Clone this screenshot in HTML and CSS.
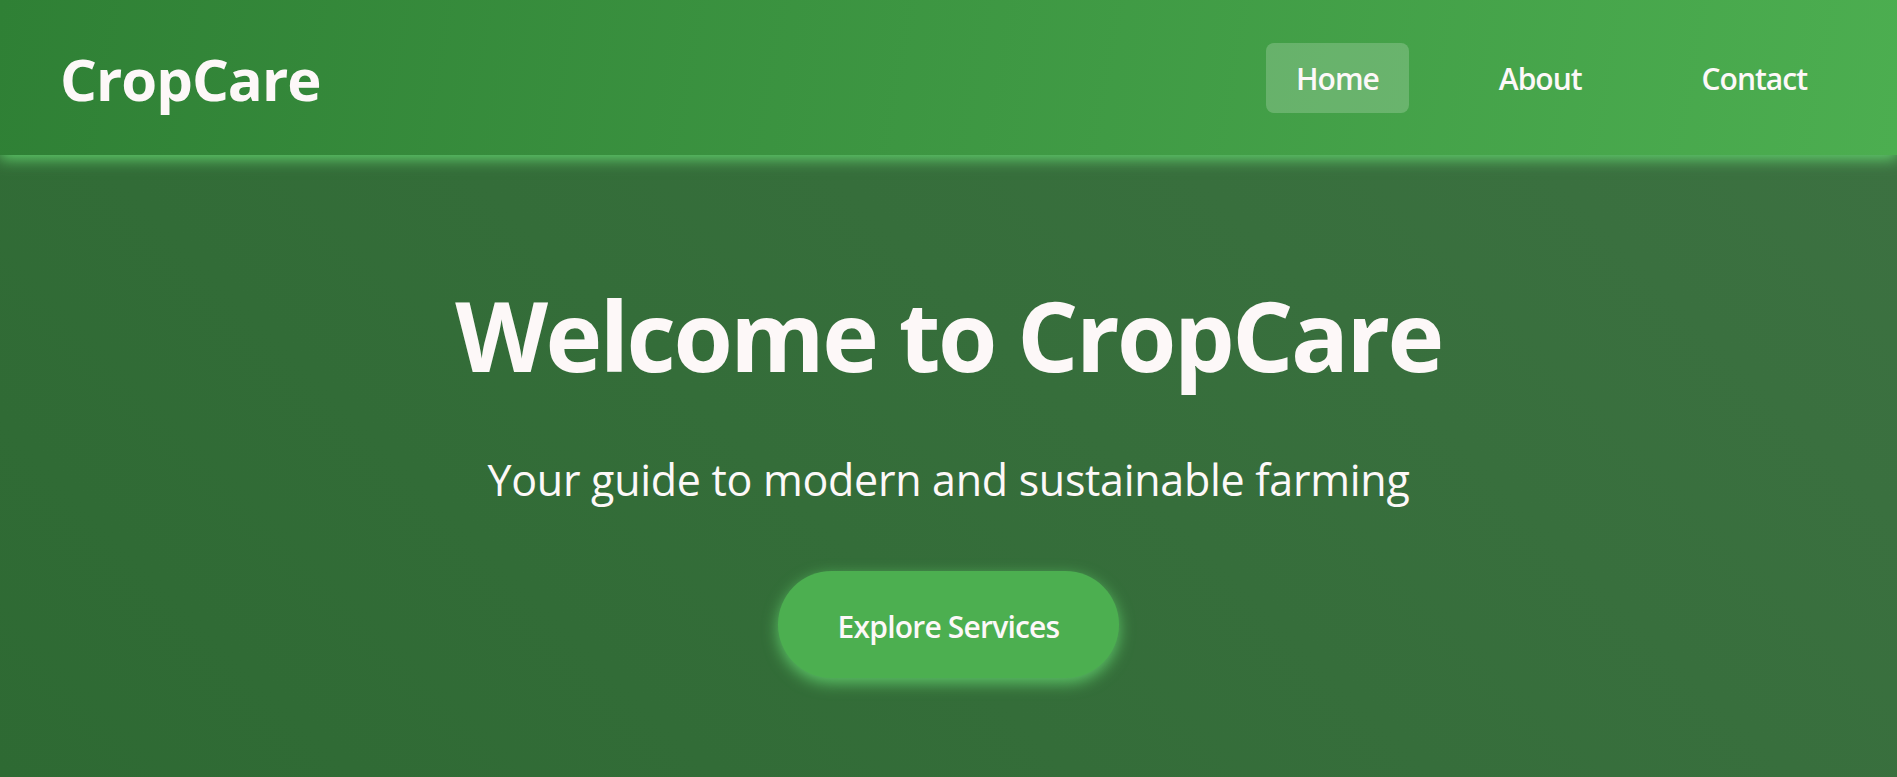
FILE: index.html
```html
<!DOCTYPE html>
<html lang="en">
<head>
<meta charset="utf-8">
<title>CropCare</title>
<link rel="stylesheet" href="styles.css">
</head>
<body>
<header class="site-header">
  <div class="logo">CropCare</div>
  <nav class="nav">
    <a class="nav-link active" href="#">Home</a>
    <a class="nav-link" href="#">About</a>
    <a class="nav-link" href="#">Contact</a>
  </nav>
</header>
<main class="hero">
  <h1 class="hero-title">Welcome to CropCare</h1>
  <p class="hero-sub">Your guide to modern and sustainable farming</p>
  <a class="btn" href="#">Explore Services</a>
</main>
</body>
</html>
```
FILE: styles.css
```css
* { box-sizing: border-box; }
html, body { margin: 0; padding: 0; }
body {
  font-family: "Open Sans", "Noto Sans", sans-serif;
  color: #fdf8f8;
  background: #316b36;
  overflow: hidden;
}
.site-header {
  position: relative;
  z-index: 2;
  height: 155px;
  padding: 0 60px;
  display: flex;
  align-items: center;
  justify-content: space-between;
  background: linear-gradient(100deg, #2f8035 0%, #4cae50 100%);
  box-shadow: 0 4px 14px rgba(104, 222, 116, 0.85);
}
.logo {
  font-size: 58px;
  font-weight: 700;
  line-height: 1.2;
  letter-spacing: -1px;
  margin-top: 3px;
}
.nav { display: flex; gap: 60px; }
.nav-link {
  color: #fdf8f8;
  text-decoration: none;
  font-size: 30px;
  font-weight: 600;
  line-height: 36px;
  letter-spacing: -1px;
  padding: 18px 30px 16px;
  border-radius: 8px;
}
.nav-link.active { background: rgba(255, 255, 255, 0.2); }
.hero {
  min-height: calc(100vh - 155px);
  padding-top: 122px;
  display: flex;
  flex-direction: column;
  align-items: center;
  text-align: center;
  background: linear-gradient(45deg, #2e6a33 0%, #3c7141 100%);
}
.hero-title {
  margin: 0;
  font-size: 96px;
  font-weight: 700;
  line-height: 1.2;
  letter-spacing: -2.5px;
}
.hero-sub {
  margin: 62px 0 0;
  font-size: 43px;
  font-weight: 400;
  line-height: 1.2;
  letter-spacing: -0.3px;
}
.btn {
  margin-top: 65px;
  display: inline-block;
  color: #fdf8f8;
  text-decoration: none;
  background: #4caf50;
  font-size: 30px;
  font-weight: 600;
  line-height: 36px;
  letter-spacing: -0.8px;
  padding: 38px 60px 33px;
  border-radius: 60px;
  box-shadow: 0 5px 15px rgba(104, 222, 116, 0.75);
}
```
